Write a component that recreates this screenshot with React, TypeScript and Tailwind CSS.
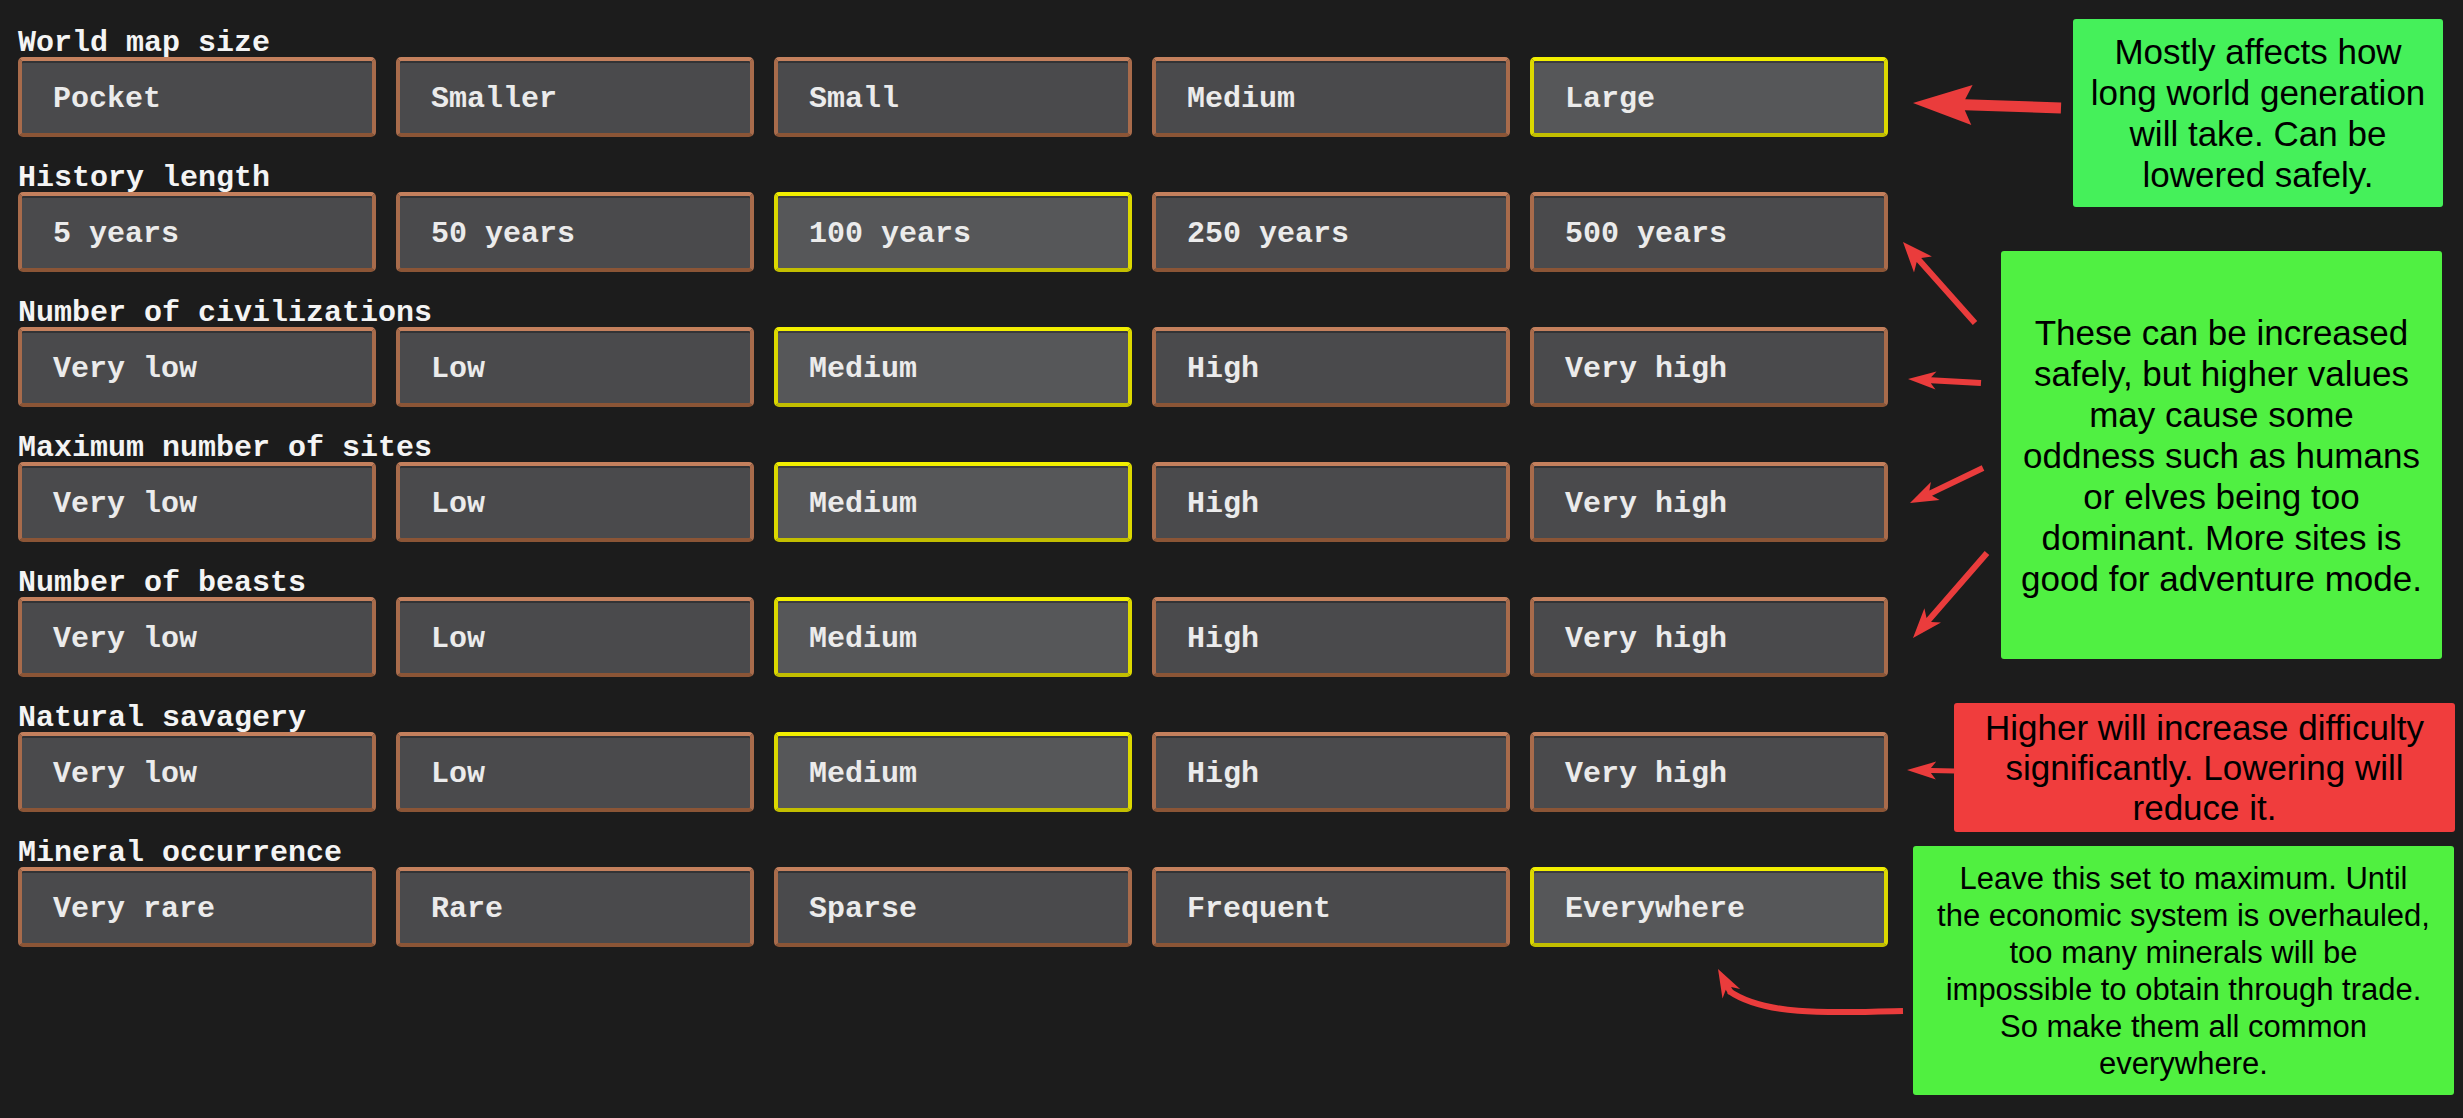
import React from "react";

type Row = { label: string; options: string[]; selected: number };

const rows: Row[] = [
  { label: "World map size", options: ["Pocket", "Smaller", "Small", "Medium", "Large"], selected: 4 },
  { label: "History length", options: ["5 years", "50 years", "100 years", "250 years", "500 years"], selected: 2 },
  { label: "Number of civilizations", options: ["Very low", "Low", "Medium", "High", "Very high"], selected: 2 },
  { label: "Maximum number of sites", options: ["Very low", "Low", "Medium", "High", "Very high"], selected: 2 },
  { label: "Number of beasts", options: ["Very low", "Low", "Medium", "High", "Very high"], selected: 2 },
  { label: "Natural savagery", options: ["Very low", "Low", "Medium", "High", "Very high"], selected: 2 },
  { label: "Mineral occurrence", options: ["Very rare", "Rare", "Sparse", "Frequent", "Everywhere"], selected: 4 },
];

function arrowPoints(x1: number, y1: number, x2: number, y2: number, w: number, L: number, H: number, n: number) {
  const dx = x2 - x1;
  const dy = y2 - y1;
  const len = Math.hypot(dx, dy);
  const ux = dx / len;
  const uy = dy / len;
  const px = -uy;
  const py = ux;
  const bx = x2 - ux * L;
  const by = y2 - uy * L;
  const nx = x2 - ux * (L - n);
  const ny = y2 - uy * (L - n);
  const pts: [number, number][] = [
    [x1 + (px * w) / 2, y1 + (py * w) / 2],
    [nx + (px * w) / 2, ny + (py * w) / 2],
    [bx + px * H, by + py * H],
    [x2, y2],
    [bx - px * H, by - py * H],
    [nx - (px * w) / 2, ny - (py * w) / 2],
    [x1 - (px * w) / 2, y1 - (py * w) / 2],
  ];
  return pts.map((p) => `${p[0].toFixed(1)},${p[1].toFixed(1)}`).join(" ");
}

function OptionButton({ text, selected }: { text: string; selected: boolean }) {
  return (
    <div
      className={
        selected
          ? "w-[358px] h-[80px] rounded-[5px] border-[4px] border-t-[#f2ef00] border-x-[#dcd800] border-b-[#c2be00] bg-[#565759] shadow-[inset_0_2px_0_rgba(0,0,0,0.3)] flex items-center pl-[31px] pt-[3px]"
          : "w-[358px] h-[80px] rounded-[5px] border-[4px] border-t-[#c4805d] border-x-[#a86b4b] border-b-[#8b5536] bg-[#4a4a4c] shadow-[inset_0_2px_0_rgba(0,0,0,0.3)] flex items-center pl-[31px] pt-[3px]"
      }
    >
      <span className="text-[30px] leading-[30px] font-bold text-[#ebebeb] whitespace-pre [font-family:'Liberation_Mono',monospace]">
        {text}
      </span>
    </div>
  );
}

export default function App() {
  return (
    <div className="relative w-[2463px] h-[1118px] bg-[#1c1c1c] overflow-hidden">
      <div className="flex flex-col gap-[25px] pl-[18px] pt-[27px]">
        {rows.map((row) => (
          <div key={row.label} className="flex flex-col">
            <div className="h-[30px] text-[30px] leading-[33px] font-bold text-[#f4f4f4] whitespace-pre [font-family:'Liberation_Mono',monospace]">
              {row.label}
            </div>
            <div className="flex gap-[20px]">
              {row.options.map((o, i) => (
                <OptionButton key={o + i} text={o} selected={i === row.selected} />
              ))}
            </div>
          </div>
        ))}
      </div>

      {/* Annotation callouts */}
      <div className="absolute left-[2073px] top-[19px] w-[370px] h-[188px] rounded-[3px] bg-[#45f05a] flex flex-col items-center justify-center text-black text-[35px] leading-[41px] [font-family:'Liberation_Sans',Arial,sans-serif]">
        <div className="whitespace-nowrap">Mostly affects how</div>
        <div className="whitespace-nowrap">long world generation</div>
        <div className="whitespace-nowrap">will take. Can be</div>
        <div className="whitespace-nowrap">lowered safely.</div>
      </div>

      <div className="absolute left-[2001px] top-[251px] w-[441px] h-[408px] rounded-[3px] bg-[#50f042] flex flex-col items-center justify-center text-black text-[35px] leading-[41px] [font-family:'Liberation_Sans',Arial,sans-serif]">
        <div className="whitespace-nowrap">These can be increased</div>
        <div className="whitespace-nowrap">safely, but higher values</div>
        <div className="whitespace-nowrap">may cause some</div>
        <div className="whitespace-nowrap">oddness such as humans</div>
        <div className="whitespace-nowrap">or elves being too</div>
        <div className="whitespace-nowrap">dominant. More sites is</div>
        <div className="whitespace-nowrap">good for adventure mode.</div>
      </div>

      <div className="absolute left-[1954px] top-[703px] w-[501px] h-[129px] rounded-[3px] bg-[#f03d3d] flex flex-col items-center justify-center text-black text-[35px] leading-[40px] [font-family:'Liberation_Sans',Arial,sans-serif]">
        <div className="whitespace-nowrap">Higher will increase difficulty</div>
        <div className="whitespace-nowrap">significantly. Lowering will</div>
        <div className="whitespace-nowrap">reduce it.</div>
      </div>

      <div className="absolute left-[1913px] top-[846px] w-[541px] h-[249px] rounded-[3px] bg-[#50f040] flex flex-col items-center justify-center text-black text-[31px] leading-[37px] [font-family:'Liberation_Sans',Arial,sans-serif]">
        <div className="whitespace-nowrap">Leave this set to maximum. Until</div>
        <div className="whitespace-nowrap">the economic system is overhauled,</div>
        <div className="whitespace-nowrap">too many minerals will be</div>
        <div className="whitespace-nowrap">impossible to obtain through trade.</div>
        <div className="whitespace-nowrap">So make them all common</div>
        <div className="whitespace-nowrap">everywhere.</div>
      </div>

      {/* Arrows */}
      <svg className="absolute left-0 top-0 pointer-events-none" width="2463" height="1118" viewBox="0 0 2463 1118">
        <g fill="#ea3c3c">
          <polygon points={arrowPoints(2061, 108, 1913, 103, 11, 59, 20, 7)} />
          <polygon points={arrowPoints(1975, 323, 1903, 242, 6, 30, 12, 6)} />
          <polygon points={arrowPoints(1981, 383, 1908, 379, 6, 28, 9, 5)} />
          <polygon points={arrowPoints(1983, 468, 1910, 503, 6, 28, 10, 5)} />
          <polygon points={arrowPoints(1987, 553, 1913, 638, 6, 30, 11, 6)} />
          <polygon points={arrowPoints(1955, 771, 1907, 770, 5, 29, 9, 5)} />
          <polygon points={arrowPoints(1731, 993, 1718, 969, 6, 28, 10, 6)} />
        </g>
        <path d="M 1903 1011 C 1830 1013, 1765 1016, 1729 991" fill="none" stroke="#ea3c3c" strokeWidth="6" />
      </svg>
    </div>
  );
}
